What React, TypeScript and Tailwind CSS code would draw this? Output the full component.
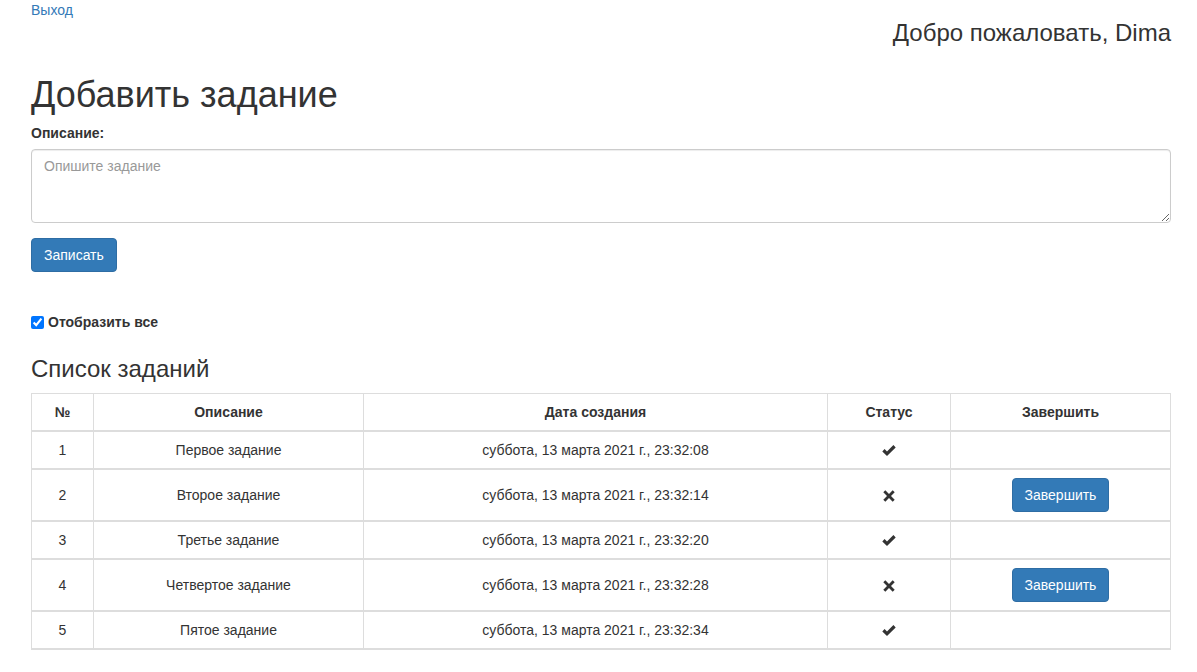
import type { FC } from 'react';

interface ITask {
  id: number;
  text: string;
  date: string;
  done: boolean;
}

const tasks: ITask[] = [
  { id: 1, text: 'Первое задание', date: 'суббота, 13 марта 2021 г., 23:32:08', done: true },
  { id: 2, text: 'Второе задание', date: 'суббота, 13 марта 2021 г., 23:32:14', done: false },
  { id: 3, text: 'Третье задание', date: 'суббота, 13 марта 2021 г., 23:32:20', done: true },
  { id: 4, text: 'Четвертое задание', date: 'суббота, 13 марта 2021 г., 23:32:28', done: false },
  { id: 5, text: 'Пятое задание', date: 'суббота, 13 марта 2021 г., 23:32:34', done: true },
];

const OkIcon: FC = () => (
  <svg viewBox="0 0 14 12" className="inline-block h-[12px] w-[14px]" aria-hidden="true">
    <path d="M0.3 6.4 L2.6 4.1 L5 6.5 L11.4 0.1 L13.7 2.4 L5 11.1 Z" fill="#333" />
  </svg>
);

const RemoveIcon: FC = () => (
  <svg viewBox="0 0 12 12" className="inline-block h-[12px] w-[12px]" aria-hidden="true">
    <path
      d="M2.3 0.3 L6 4 L9.7 0.3 L11.7 2.3 L8 6 L11.7 9.7 L9.7 11.7 L6 8 L2.3 11.7 L0.3 9.7 L4 6 L0.3 2.3 Z"
      fill="#333"
    />
  </svg>
);

const btn =
  'inline-block rounded-[4px] border border-[#2e6da4] bg-[#337ab7] px-3 py-[6px] text-[14px] leading-[20px] text-white';

const App: FC = () => {
  return (
    <div className="min-h-screen bg-white font-['Liberation_Sans',Arial,sans-serif] text-[14px] leading-[20px] text-[#333]">
      <div className="w-[1171px] pl-[31px]">
        <a href="#" className="block text-[#337ab7]">
          Выход
        </a>
        <h3 className="text-right text-[24px] leading-[26px]">Добро пожаловать, Dima</h3>

        <h1 className="mt-[29px] mb-[8px] text-[36px] leading-[40px]">Добавить задание</h1>

        <form className="flex flex-col">
          <label className="mb-[6px] font-bold">Описание:</label>
          <textarea
            placeholder="Опишите задание"
            className="h-[74px] w-full rounded-[4px] border border-[#ccc] px-3 py-[6px] text-[14px] leading-[20px] shadow-[inset_0_1px_1px_rgba(0,0,0,0.075)] outline-none placeholder:text-[#999]"
          />
          <div className="mt-[15px]">
            <button type="button" className={btn}>
              Записать
            </button>
          </div>
        </form>

        <label className="mt-[40px] flex items-center gap-[4px] font-bold">
          <input type="checkbox" defaultChecked className="m-0 h-[13px] w-[13px] accent-[#0075ff]" />
          Отобразить все
        </label>

        <h3 className="mt-[24px] mb-[11px] text-[24px] leading-[26px]">Список заданий</h3>

        <table className="w-full border-collapse border border-[#ddd] text-center">
          <thead>
            <tr className="border-b-2 border-[#ddd]">
              <th className="w-[62px] border-x border-[#ddd] p-2 font-bold">№</th>
              <th className="w-[270px] border-x border-[#ddd] p-2 font-bold">Описание</th>
              <th className="w-[464px] border-x border-[#ddd] p-2 font-bold">Дата создания</th>
              <th className="w-[123px] border-x border-[#ddd] p-2 font-bold">Статус</th>
              <th className="border-x border-[#ddd] p-2 font-bold">Завершить</th>
            </tr>
          </thead>
          <tbody>
            {tasks.map((t) => (
              <tr key={t.id} className="border-b-2 border-[#ddd]">
                <td className="border-x border-[#ddd] p-2 align-middle">{t.id}</td>
                <td className="border-x border-[#ddd] p-2 align-middle">{t.text}</td>
                <td className="border-x border-[#ddd] p-2 align-middle">{t.date}</td>
                <td className="border-x border-[#ddd] p-2 align-middle">
                  {t.done ? <OkIcon /> : <RemoveIcon />}
                </td>
                <td className="border-x border-[#ddd] p-2 align-middle">
                  {!t.done && (
                    <button type="button" className={btn}>
                      Завершить
                    </button>
                  )}
                </td>
              </tr>
            ))}
          </tbody>
        </table>
      </div>
    </div>
  );
};

export default App;
